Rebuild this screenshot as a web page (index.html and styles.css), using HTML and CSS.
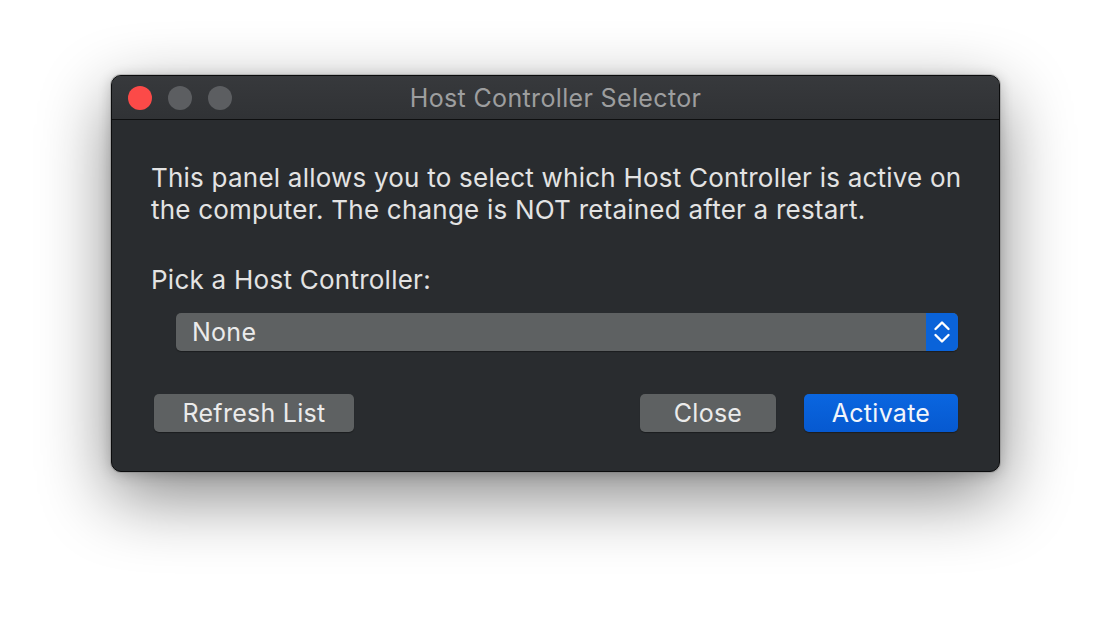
FILE: index.html
```html
<!DOCTYPE html>
<html>
<head>
<meta charset="utf-8">
<link rel="stylesheet" href="styles.css">
</head>
<body>
<div class="stage">
  <div class="window">
    <div class="titlebar">
      <div class="lights">
        <span class="light red"></span>
        <span class="light gray"></span>
        <span class="light gray"></span>
      </div>
      <div class="title">Host Controller Selector</div>
    </div>
    <div class="content">
      <p class="desc">This panel allows you to select which Host Controller is active on the computer. The change is NOT retained after a restart.</p>
      <p class="label">Pick a Host Controller:</p>
      <div class="popup">
        <span class="popup-text">None</span>
        <span class="popup-arrows">
          <svg width="18" height="28" viewBox="0 0 18 28"><path d="M2.5 11 L9 4.5 L15.5 11" fill="none" stroke="#fff" stroke-width="2.4" stroke-linecap="round" stroke-linejoin="round"/><path d="M2.5 17 L9 23.5 L15.5 17" fill="none" stroke="#fff" stroke-width="2.4" stroke-linecap="round" stroke-linejoin="round"/></svg>
        </span>
      </div>
      <div class="buttons">
        <button class="btn refresh">Refresh List</button>
        <div class="right">
          <button class="btn close">Close</button>
          <button class="btn primary">Activate</button>
        </div>
      </div>
    </div>
  </div>
</div>
</body>
</html>
```
FILE: styles.css
```css
html, body {
  margin: 0;
  padding: 0;
  background: #ffffff;
  font-family: Inter, "Noto Sans", "Liberation Sans", sans-serif;
}
body {
  min-height: 620px;
}
.stage {
  display: flex;
  align-items: flex-start;
  padding: 75px 0 0 111px;
  min-height: 620px;
  box-sizing: border-box;
}
.window {
  width: 889px;
  height: 397px;
  box-sizing: border-box;
  background: #292c2f;
  border: 1px solid #0b0c0d;
  border-radius: 10px;
  box-shadow: inset 0 1px 0 rgba(255,255,255,0.18), 0 0 0 1px rgba(120,120,120,0.35), 0 24px 70px rgba(0,0,0,0.48), 0 2px 14px rgba(0,0,0,0.2);
  overflow: hidden;
  display: flex;
  flex-direction: column;
}
.titlebar {
  height: 43px;
  flex: none;
  background: linear-gradient(#37393c, #303235);
  border-bottom: 1px solid #0e0f10;
  display: flex;
  align-items: center;
  position: relative;
}
.lights {
  display: flex;
  gap: 16px;
  padding-left: 16px;
  position: relative;
  z-index: 1;
}
.light {
  width: 24px;
  height: 24px;
  border-radius: 50%;
  display: block;
}
.light.red { background: #fc4a48; }
.light.gray { background: #5c5e61; }
.title {
  position: absolute;
  left: 0;
  right: 0;
  top: 1px;
  bottom: 0;
  display: flex;
  align-items: center;
  justify-content: center;
  color: #9d9e9f;
  font-size: 25px;
  letter-spacing: 0.35px;
}
.content {
  padding: 42px 35px 0 39px;
  color: #e3e3e3;
  font-size: 26px;
}
.desc {
  margin: 0;
  line-height: 32px;
  letter-spacing: 0.22px;
}
.label {
  margin: 38px 0 0;
  line-height: 32px;
  letter-spacing: 0.25px;
}
.popup {
  margin: 17px 6px 0 25px;
  height: 38px;
  background: #5e6162;
  border-radius: 5px;
  display: flex;
  align-items: center;
  justify-content: space-between;
  overflow: hidden;
  box-shadow: 0 1px 1px rgba(0,0,0,0.35);
}
.popup-text {
  padding-left: 16px;
  color: #ebebeb;
  font-size: 25px;
  letter-spacing: 0.27px;
}
.popup-arrows {
  width: 32px;
  height: 38px;
  background: #0a63d9;
  display: flex;
  align-items: center;
  justify-content: center;
  border-radius: 0 5px 5px 0;
}
.buttons {
  margin: 43px 6px 0 3px;
  display: flex;
  justify-content: space-between;
}
.right {
  display: flex;
  gap: 28px;
}
.btn {
  height: 38px;
  border: none;
  border-radius: 5px;
  background: #5e6162;
  color: #ebebeb;
  font-family: inherit;
  font-size: 25px;
  letter-spacing: 0.27px;
  padding: 0;
  box-shadow: 0 1px 1px rgba(0,0,0,0.35);
}
.refresh { width: 200px; }
.close { width: 136px; }
.primary {
  width: 154px;
  background: linear-gradient(#0a66e0, #0659d0);
  color: #f2f5fb;
}
```
